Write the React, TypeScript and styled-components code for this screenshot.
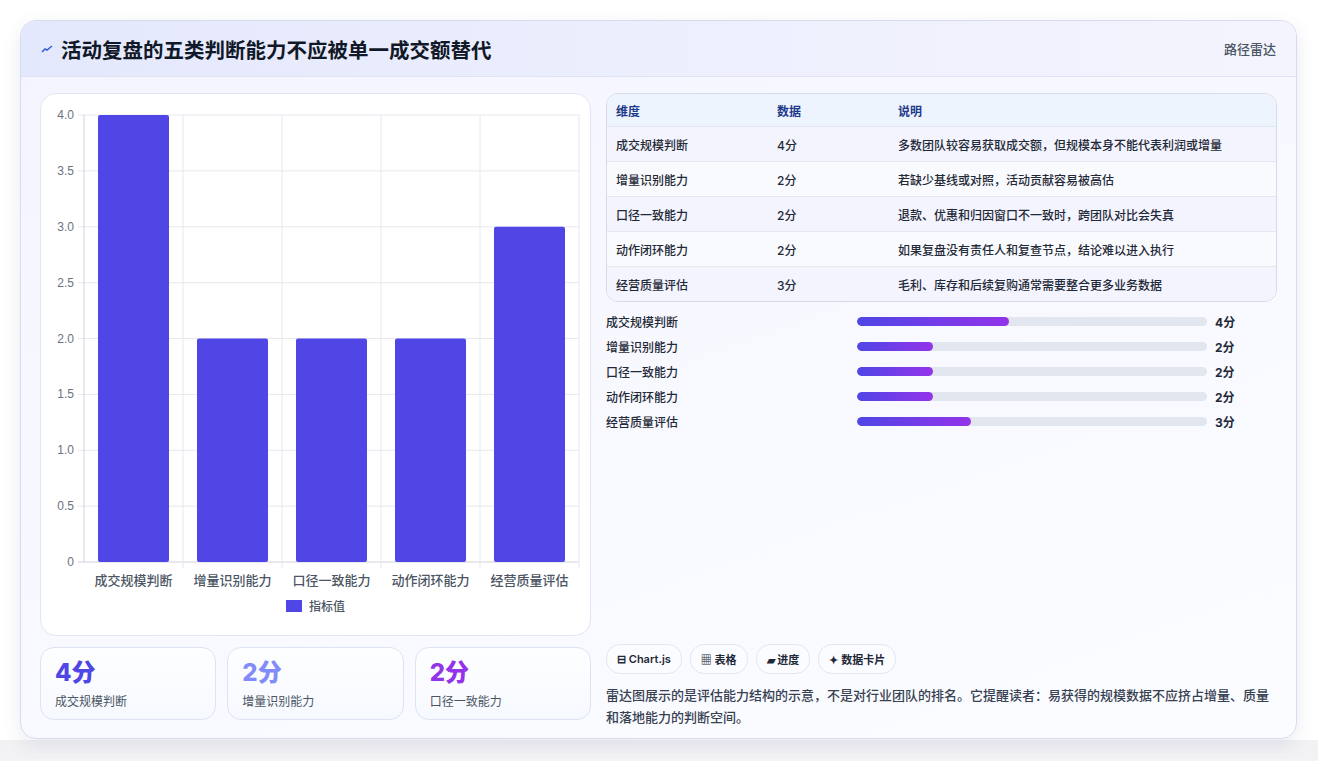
import React from "react";
import styled, { createGlobalStyle } from "styled-components";

const G = createGlobalStyle`
  html,body{margin:0;padding:0;background:#f4f4f6;font-family:Inter,"Noto Sans CJK SC",sans-serif;}
`;
const Page = styled.div`padding:20px 20px 20px 20px;width:1318px;box-sizing:border-box;background:linear-gradient(#fff,#fff 740px,#f2f2f4 740px);`;
const Card = styled.div`width:1277px;height:719px;box-sizing:border-box;border:1px solid #d6dcef;border-radius:16px;overflow:hidden;
  background:linear-gradient(160deg,#f3f4ff,#f8f9ff 50%,#fbfcff);box-shadow:0 6px 18px rgba(80,90,140,.12);display:flex;flex-direction:column;`;
const Header = styled.div`height:55px;flex:none;display:flex;align-items:center;justify-content:space-between;padding:0 20px;
  background:linear-gradient(90deg,#e4e8fc,#eef0fd 60%,#f4f4fe);border-bottom:1px solid #dfe3f3;`;
const Title = styled.h1`margin:0;font-size:20.5px;font-weight:700;color:#111827;display:flex;align-items:center;gap:8px;`;
const Tag = styled.span`font-size:13px;color:#4b5563;font-weight:500;`;
const Body = styled.div`display:flex;gap:15px;padding:16px 19px 0 19px;`;
const Left = styled.div`width:551px;display:flex;flex-direction:column;gap:11px;`;
const ChartBox = styled.div`height:543px;background:#fff;border:1px solid #e2e6f0;border-radius:16px;box-sizing:border-box;`;
const Stats = styled.div`display:flex;gap:11px;`;
const Stat = styled.div`flex:1;height:73px;box-sizing:border-box;border:1px solid #dce4f2;border-radius:14px;background:linear-gradient(#fdfeff,#f6f9fe);padding:10px 14px;`;
const StatVal = styled.div<{ c: string }>`font-size:24px;font-weight:800;color:${p => p.c};line-height:30px;`;
const StatLab = styled.div`font-size:12px;color:#4b5563;margin-top:4px;`;
const Right = styled.div`width:673px;display:flex;flex-direction:column;`;
const Table = styled.div`border:1px solid #d4dbea;border-radius:12px;overflow:hidden;background:#fff;`;
const Row = styled.div<{ head?: boolean; alt?: boolean }>`display:grid;grid-template-columns:161px 121px 1fr;height:${p => p.head ? 32 : 34}px;align-items:center;padding-left:9px;
  font-size:12px;font-weight:${p => p.head ? 600 : 500};color:${p => p.head ? "#1e3a8a" : "#1f2937"};
  background:${p => p.head ? "#eef4fe" : p.alt ? "#f3f4fe" : "#f9fafd"};border-top:${p => p.head ? "none" : "1px solid #e3e7f0"};`;
const Bars = styled.div`display:flex;flex-direction:column;gap:6px;margin-top:10px;`;
const BarRow = styled.div`display:grid;grid-template-columns:251px 350px 40px;align-items:center;height:19px;font-size:12px;font-weight:500;color:#1f2937;`;
const Track = styled.div`height:9px;border-radius:5px;background:#e2e6ee;overflow:hidden;`;
const Fill = styled.div`height:100%;border-radius:5px;background:linear-gradient(90deg,#4f46e5,#9333ea);`;
const Score = styled.span`padding-left:8px;font-weight:700;`;
const Chips = styled.div`display:flex;gap:8px;margin-top:213px;`;
const Chip = styled.span`height:28px;padding:0 10px;border:1px solid #e2e6ee;border-radius:14px;background:#fbfcff;display:flex;align-items:center;gap:4px;font-size:11px;font-weight:600;color:#1f2937;`;
const Note = styled.p`margin:10px 0 0;font-size:13px;line-height:22px;color:#374151;font-weight:500;`;

const cats = ["成交规模判断", "增量识别能力", "口径一致能力", "动作闭环能力", "经营质量评估"];
const vals = [4, 2, 2, 2, 3];
const desc = ["多数团队较容易获取成交额，但规模本身不能代表利润或增量", "若缺少基线或对照，活动贡献容易被高估", "退款、优惠和归因窗口不一致时，跨团队对比会失真", "如果复盘没有责任人和复查节点，结论难以进入执行", "毛利、库存和后续复购通常需要整合更多业务数据"];

function Chart() {
  const L = 43, R = 538, T = 21, B = 468, cw = (R - L) / 5, u = (B - T) / 8;
  const ticks = [0, 0.5, 1, 1.5, 2, 2.5, 3, 3.5, 4];
  return (
    <svg width="549" height="541" style={{ display: "block" }}>
      {ticks.map(t => { const y = B - t * 2 * u; return <g key={t}>
        <line x1={L - 6} x2={R} y1={y} y2={y} stroke={t === 0 ? "#cfd3dc" : "#e6e8ee"} />
        <text x={L - 10} y={y + 4} fontSize="12" fill="#6b7280" textAnchor="end" fontFamily="Liberation Sans, sans-serif">{t === 0 ? "0" : t.toFixed(1)}</text></g>; })}
      {[0, 1, 2, 3, 4, 5].map(i => <line key={i} x1={L + i * cw} x2={L + i * cw} y1={T} y2={B + (i === 0 ? 0 : 6)} stroke={i === 0 ? "#cfd3dc" : "#e6e8ee"} />)}
      {vals.map((v, i) => <rect key={i} x={L + i * cw + 14} y={B - v * 2 * u} width={cw - 28} height={v * 2 * u} rx="2" fill="#4f46e5" />)}
      {cats.map((c, i) => <text key={c} x={L + i * cw + cw / 2} y={491} fontSize="13" fontWeight="500" fill="#4b5563" textAnchor="middle">{c}</text>)}
      <rect x="245" y="506" width="16" height="12" fill="#4f46e5" />
      <text x="268" y="517" fontSize="12" fontWeight="500" fill="#4b5563">指标值</text>
    </svg>
  );
}

export default function App() {
  return (
    <Page><G />
      <Card>
        <Header>
          <Title><svg width="12" height="12" viewBox="0 0 12 12"><path d="M1 9 L4 6 L6 7 L11 3" stroke="#3b5bdb" strokeWidth="1.5" fill="none" /></svg>活动复盘的五类判断能力不应被单一成交额替代</Title>
          <Tag>路径雷达</Tag>
        </Header>
        <Body>
          <Left>
            <ChartBox><Chart /></ChartBox>
            <Stats>
              <Stat><StatVal c="#4f46e5">4分</StatVal><StatLab>成交规模判断</StatLab></Stat>
              <Stat><StatVal c="#818cf8">2分</StatVal><StatLab>增量识别能力</StatLab></Stat>
              <Stat><StatVal c="#9333ea">2分</StatVal><StatLab>口径一致能力</StatLab></Stat>
            </Stats>
          </Left>
          <Right>
            <Table>
              <Row head><span>维度</span><span>数据</span><span>说明</span></Row>
              {cats.map((c, i) => <Row key={c} alt={i % 2 === 0}><span>{c}</span><span>{vals[i]}分</span><span>{desc[i]}</span></Row>)}
            </Table>
            <Bars>
              {cats.map((c, i) => <BarRow key={c}><span>{c}</span><Track><Fill style={{ width: `${vals[i] * 10.86}%` }} /></Track><Score>{vals[i]}分</Score></BarRow>)}
            </Bars>
            <Chips>
              <Chip>⊟ Chart.js</Chip><Chip>▦ 表格</Chip><Chip>▰ 进度</Chip><Chip>✦ 数据卡片</Chip>
            </Chips>
            <Note>雷达图展示的是评估能力结构的示意，不是对行业团队的排名。它提醒读者：易获得的规模数据不应挤占增量、质量和落地能力的判断空间。</Note>
          </Right>
        </Body>
      </Card>
    </Page>
  );
}
